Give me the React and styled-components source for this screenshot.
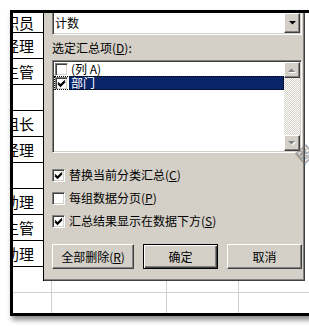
import React from "react";
import styled, { createGlobalStyle, css } from "styled-components";

const GlobalStyle = createGlobalStyle`
  html, body {
    margin: 0;
    padding: 0;
    background: #ffffff;
    overflow: hidden;
  }
  body {
    font-family: "Noto Sans CJK SC", "Liberation Sans", sans-serif;
    color: #000000;
  }
  *, *::before, *::after {
    box-sizing: border-box;
  }
`;

const sunken = css`
  background: #ffffff;
  border: 1px solid;
  border-color: #808080 #ffffff #ffffff #808080;
  box-shadow: inset 1px 1px #404040, inset -1px -1px #d4d0c8;
  padding: 1px;
`;

const raised = css`
  background: #d4d0c8;
  border: 1px solid;
  border-color: #ffffff #404040 #404040 #ffffff;
  box-shadow: inset -1px -1px #808080;
`;

const Page = styled.div`
  width: 309px;
  height: 327px;
  padding: 10px 0 0 10px;
  overflow: hidden;
`;

const Frame = styled.div`
  position: relative;
  width: 323px;
  border: 3px solid #000000;
  border-right: none;
  background: #ffffff;
  box-shadow: 2px 4px 5px rgba(0, 0, 0, 0.45);
`;

const Upper = styled.div`
  display: flex;
  height: 268px;
`;

const NameColumn = styled.div`
  width: 31px;
  flex-shrink: 0;
  border-right: 1px solid #000000;
  display: flex;
  flex-direction: column;
`;

const NameCell = styled.div`
  height: ${(p) => (p.$first ? 20 : 26)}px;
  border-bottom: 1px solid #000000;
  overflow: hidden;
  white-space: nowrap;
  display: flex;
  align-items: center;
  justify-content: flex-end;
  padding-right: 9px;
  font-size: 15px;
  line-height: 16px;
`;

const Dialog = styled.div`
  width: 261px;
  flex-shrink: 0;
  height: 268px;
  overflow: hidden;
  background: #d4d0c8;
  border-right: 1px solid #404040;
  border-bottom: 1px solid #404040;
  box-shadow: inset -1px -1px #808080;
  padding: 0 2px 0 8px;
  display: flex;
  flex-direction: column;
  font-size: 12px;
  line-height: 14px;
`;

const Combo = styled.div`
  ${sunken};
  margin-top: -2px;
  height: 24px;
  display: flex;
  align-items: stretch;
`;

const ComboText = styled.div`
  flex: 1;
  display: flex;
  align-items: center;
  padding-left: 1px;
`;

const ArrowButton = styled.div`
  ${raised};
  width: 16px;
  flex-shrink: 0;
  display: flex;
  align-items: center;
  justify-content: center;
  height: ${(p) => (p.$square ? "16px" : "auto")};
`;

const Label = styled.div`
  margin-top: 6px;
  height: 14px;
  white-space: nowrap;
`;

const ListBox = styled.div`
  ${sunken};
  margin-top: 5px;
  height: 93px;
  display: flex;
`;

const Items = styled.div`
  flex: 1;
  display: flex;
  flex-direction: column;
`;

const Item = styled.div`
  height: 14px;
  display: flex;
  align-items: center;
  padding-left: 1px;
  white-space: nowrap;
  outline: ${(p) => (p.$focused ? "1px dotted #000000" : "none")};
  outline-offset: -1px;
`;

const ItemText = styled.span`
  flex: 1;
  height: 14px;
  margin-left: 1px;
  padding-left: 2px;
  display: flex;
  align-items: center;
  line-height: 12px;
  background: ${(p) => (p.$selected ? "#0a246a" : "transparent")};
  color: ${(p) => (p.$selected ? "#ffffff" : "#000000")};
  border: ${(p) => (p.$selected ? "1px dotted #e8e2a8" : "none")};
  border-left: none;
`;

const ScrollBar = styled.div`
  width: 16px;
  display: flex;
  flex-direction: column;
`;

const Track = styled.div`
  flex: 1;
  background-color: #ffffff;
  background-image: repeating-conic-gradient(#d4d0c8 0 25%, #ffffff 0 50%);
  background-size: 2px 2px;
`;

const Box = styled.span`
  ${sunken};
  width: 13px;
  height: 13px;
  flex-shrink: 0;
  padding: 0;
  display: inline-flex;
  align-items: center;
  justify-content: center;
`;

const Options = styled.div`
  margin-top: 14px;
  display: flex;
  flex-direction: column;
  gap: 7px;
`;

const OptionRow = styled.div`
  height: 16px;
  display: flex;
  align-items: center;
  gap: 4px;
  white-space: nowrap;
`;

const ButtonRow = styled.div`
  margin-top: 15px;
  display: flex;
  gap: 9px;
`;

const PushButton = styled.div`
  width: ${(p) => p.$w}px;
  height: 25px;
  display: flex;
  align-items: center;
  justify-content: center;
  white-space: nowrap;
  background: #d4d0c8;
  ${(p) =>
    p.$default
      ? css`
          border: 1px solid #000000;
          box-shadow: inset 1px 1px #ffffff, inset -1px -1px #404040,
            inset -2px -2px #808080;
        `
      : css`
          border: 1px solid;
          border-color: #ffffff #404040 #404040 #ffffff;
          box-shadow: inset -1px -1px #808080;
        `}
`;

const Lower = styled.div`
  display: grid;
  grid-template-columns: 39px 115px 72px 1fr;
  grid-template-rows: 12px 20px;
`;

const SheetCell = styled.div`
  border-right: 1px solid #d0d0d0;
  border-bottom: ${(p) => (p.$last ? "none" : "1px solid #d0d0d0")};
`;

const Watermark = styled.div`
  position: absolute;
  left: 283px;
  top: 128px;
  font-size: 17px;
  font-weight: 700;
  color: rgba(110, 110, 110, 0.55);
  transform: rotate(-40deg);
  pointer-events: none;
`;

function Check() {
  return (
    <svg width="9" height="9" viewBox="0 0 9 9">
      <path d="M1 3.5 L3.5 6 L8 1.5 M1 4.8 L3.5 7.3 L8 2.8" stroke="#000" strokeWidth="1.3" fill="none" />
    </svg>
  );
}

function CheckBox({ checked }) {
  return <Box>{checked && <Check />}</Box>;
}

function Arrow({ dir, disabled }) {
  const pts = dir === "up" ? "0,4 7,4 3.5,0.5" : "0,0 7,0 3.5,3.5";
  if (disabled) {
    return (
      <svg width="8" height="5" viewBox="0 0 8 5">
        <polygon points={pts} transform="translate(1,1)" fill="#ffffff" />
        <polygon points={pts} fill="#808080" />
      </svg>
    );
  }
  return (
    <svg width="7" height="4" viewBox="0 0 7 4">
      <polygon points={pts} fill="#000000" />
    </svg>
  );
}

const names = [
  { text: "职员", first: true },
  { text: "经理" },
  { text: "主管" },
  { text: "" },
  { text: "组长" },
  { text: "经理" },
  { text: "" },
  { text: "助理" },
  { text: "主管" },
  { text: "助理" },
];

export default function App() {
  return (
    <>
      <GlobalStyle />
      <Page>
        <Frame>
          <Upper>
            <NameColumn>
              {names.map((n, i) => (
                <NameCell key={i} $first={n.first}>
                  {n.text}
                </NameCell>
              ))}
            </NameColumn>
            <Dialog>
              <Combo>
                <ComboText>计数</ComboText>
                <ArrowButton>
                  <Arrow dir="down" />
                </ArrowButton>
              </Combo>
              <Label>
                选定汇总项(<u>D</u>):
              </Label>
              <ListBox>
                <Items>
                  <Item>
                    <CheckBox />
                    <ItemText>(列 A)</ItemText>
                  </Item>
                  <Item $focused>
                    <CheckBox checked />
                    <ItemText $selected>部门</ItemText>
                  </Item>
                </Items>
                <ScrollBar>
                  <ArrowButton $square>
                    <Arrow dir="up" disabled />
                  </ArrowButton>
                  <Track />
                  <ArrowButton $square>
                    <Arrow dir="down" disabled />
                  </ArrowButton>
                </ScrollBar>
              </ListBox>
              <Options>
                <OptionRow>
                  <CheckBox checked />
                  <span>
                    替换当前分类汇总(<u>C</u>)
                  </span>
                </OptionRow>
                <OptionRow>
                  <CheckBox />
                  <span>
                    每组数据分页(<u>P</u>)
                  </span>
                </OptionRow>
                <OptionRow>
                  <CheckBox checked />
                  <span>
                    汇总结果显示在数据下方(<u>S</u>)
                  </span>
                </OptionRow>
              </Options>
              <ButtonRow>
                <PushButton $w={82}>
                  全部删除(<u>R</u>)
                </PushButton>
                <PushButton $w={75} $default>
                  确定
                </PushButton>
                <PushButton $w={75}>取消</PushButton>
              </ButtonRow>
            </Dialog>
          </Upper>
          <Lower>
            <SheetCell />
            <SheetCell />
            <SheetCell />
            <SheetCell />
            <SheetCell $last />
            <SheetCell $last />
            <SheetCell $last />
            <SheetCell $last />
          </Lower>
          <Watermark>图</Watermark>
        </Frame>
      </Page>
    </>
  );
}
